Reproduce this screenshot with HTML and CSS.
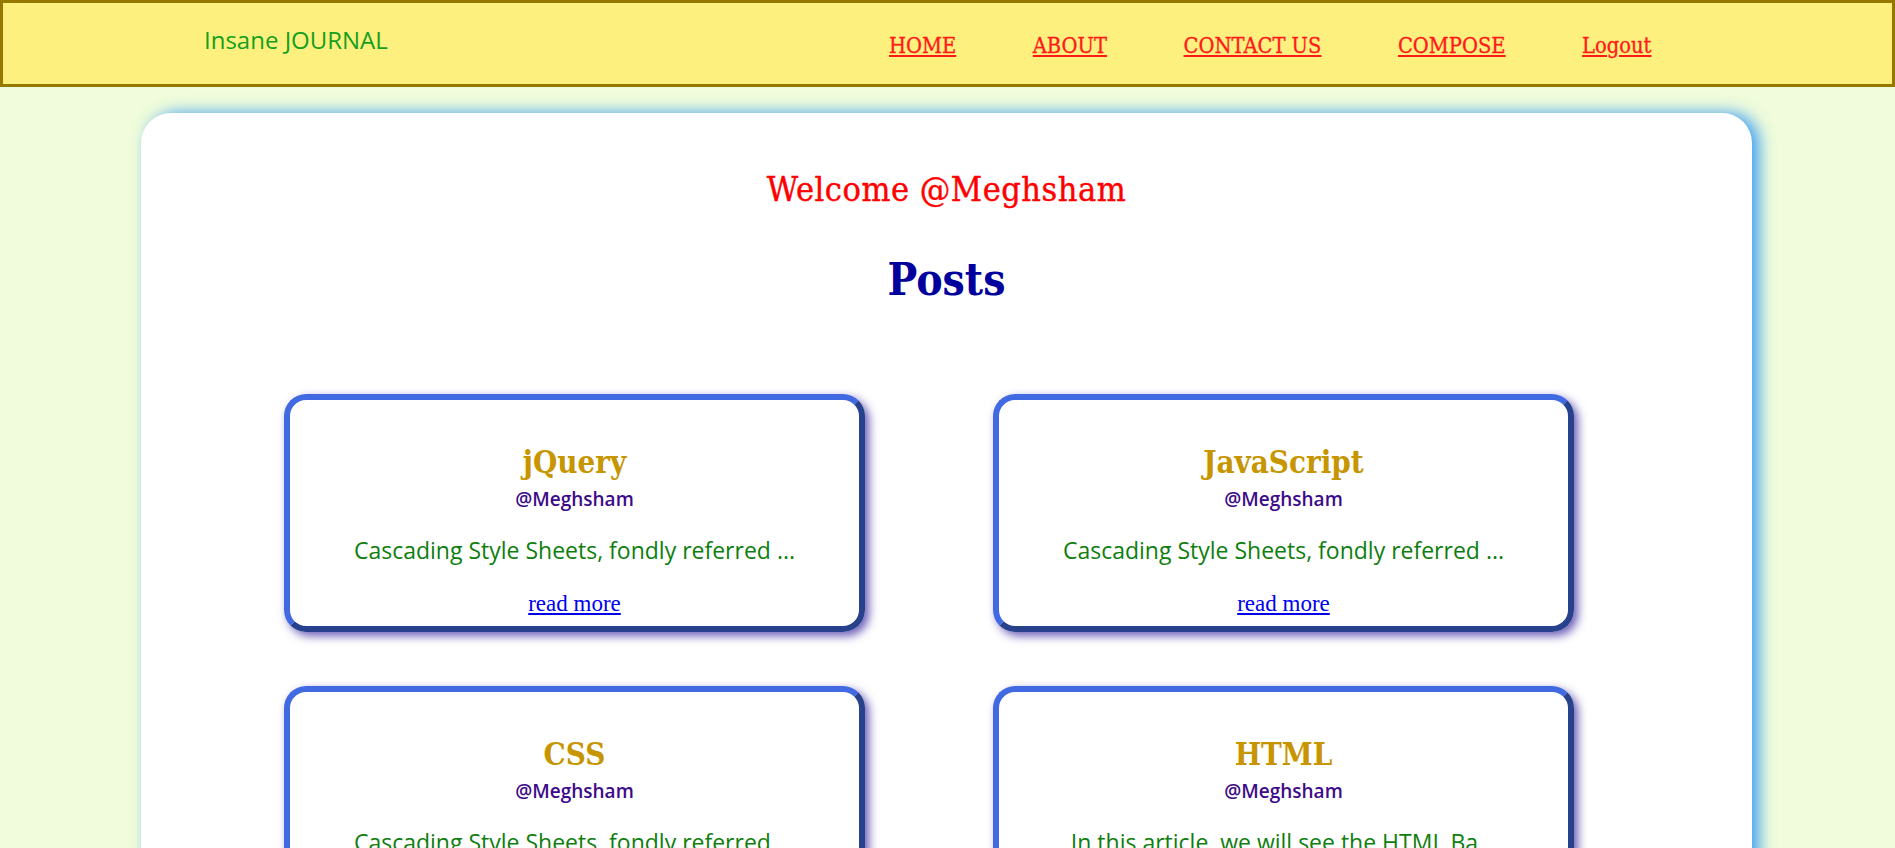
FILE: index.html
```html
<!DOCTYPE html>
<html lang="en">
<head>
<meta charset="utf-8">
<title>Insane JOURNAL</title>
<link rel="stylesheet" href="styles.css">
</head>
<body>
<header class="site-header">
  <div class="brand">Insane JOURNAL</div>
  <nav class="nav">
    <a href="#" class="nav-link">HOME</a>
    <a href="#" class="nav-link">ABOUT</a>
    <a href="#" class="nav-link">CONTACT US</a>
    <a href="#" class="nav-link">COMPOSE</a>
    <a href="#" class="nav-link">Logout</a>
  </nav>
</header>
<main class="panel">
  <h1 class="welcome">Welcome @Meghsham</h1>
  <h1 class="posts-title">Posts</h1>
  <section class="post-grid">
    <article class="post-card">
      <h2 class="post-title">jQuery</h2>
      <h4 class="post-author">@Meghsham</h4>
      <p class="post-excerpt">Cascading Style Sheets, fondly referred ...</p>
      <p class="post-more"><a href="#">read more</a></p>
    </article>
    <article class="post-card">
      <h2 class="post-title">JavaScript</h2>
      <h4 class="post-author">@Meghsham</h4>
      <p class="post-excerpt">Cascading Style Sheets, fondly referred ...</p>
      <p class="post-more"><a href="#">read more</a></p>
    </article>
    <article class="post-card">
      <h2 class="post-title">CSS</h2>
      <h4 class="post-author">@Meghsham</h4>
      <p class="post-excerpt">Cascading Style Sheets, fondly referred ...</p>
      <p class="post-more"><a href="#">read more</a></p>
    </article>
    <article class="post-card">
      <h2 class="post-title">HTML</h2>
      <h4 class="post-author">@Meghsham</h4>
      <p class="post-excerpt">In this article, we will see the HTML Ba...</p>
      <p class="post-more"><a href="#">read more</a></p>
    </article>
  </section>
</main>
</body>
</html>
```
FILE: styles.css
```css
html, body {
  margin: 0;
  padding: 0;
}
body {
  background: #f0fcdb;
  font-family: "Open Sans", "Noto Sans", sans-serif;
}
.site-header {
  display: flex;
  align-items: flex-start;
  height: 81px;
  background: #fef07f;
  border: 3px solid #957800;
  padding-left: 201px;
}
.brand {
  flex: 0 0 685px;
  margin-top: 21px;
  font-family: "Open Sans", sans-serif;
  font-weight: 500;
  font-size: 24px;
  line-height: 32px;
  color: #14a01c;
}
.nav {
  display: flex;
  gap: 76.5px;
  margin-top: 30px;
}
.nav-link {
  font-family: "DejaVu Serif Condensed", "DejaVu Serif", serif;
  font-size: 21.7px;
  line-height: 26px;
  color: #ff1a1a;
  text-decoration: underline;
  -webkit-text-stroke: 0.3px #ff1a1a;
}
.panel {
  margin: 26px 0 0 141px;
  width: 1611px;
  background: #fff;
  border-radius: 30px;
  box-shadow: 7px 0 16px #3f9ff5;
  padding: 56px 0 40px;
}
.welcome {
  margin: 0;
  text-align: center;
  font-family: "DejaVu Serif Condensed", "DejaVu Serif", serif;
  font-weight: normal;
  font-size: 34px;
  line-height: 40px;
  letter-spacing: 0.5px;
  color: #ff0000;
  -webkit-text-stroke: 0.4px #ff0000;
}
.posts-title {
  margin: 45px 0 0;
  text-align: center;
  font-family: "DejaVu Serif Condensed", "DejaVu Serif", serif;
  font-weight: bold;
  font-size: 44px;
  line-height: 52px;
  color: #00009c;
}
.post-grid {
  display: grid;
  grid-template-columns: 581px 581px;
  column-gap: 128px;
  row-gap: 54px;
  margin-top: 88px;
  padding-left: 143px;
}
.post-card {
  border: 6px outset #4169e1;
  border-radius: 22px;
  box-shadow: 4px 4px 10px rgba(60, 40, 160, 0.75);
  text-align: center;
  padding: 44px 20px 9px;
}
.post-title {
  margin: 0;
  font-family: "DejaVu Serif Condensed", "DejaVu Serif", serif;
  font-weight: bold;
  font-size: 31px;
  line-height: 36px;
  color: #c79500;
}
.post-author {
  margin: 7px 0 0;
  font-family: "Open Sans", sans-serif;
  font-weight: 600;
  font-size: 19px;
  line-height: 24px;
  color: #3d0a8a;
}
.post-excerpt {
  margin: 24px 0 0;
  font-family: "Open Sans", sans-serif;
  font-size: 23px;
  line-height: 30px;
  color: #0e7e0e;
}
.post-more {
  margin: 26px 0 0;
  font-family: "Liberation Serif", serif;
  font-size: 23px;
  line-height: 26px;
}
.post-more a {
  color: #0000ee;
}
```
